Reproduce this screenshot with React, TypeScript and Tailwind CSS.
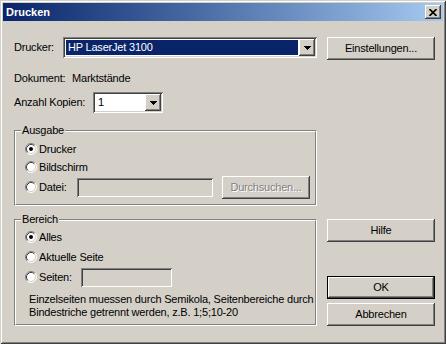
import type { ReactNode } from 'react';

const raised = 'shadow-[inset_-1px_-1px_#404040,inset_1px_1px_#ffffff,inset_-2px_-2px_#808080,inset_2px_2px_#d4d0c8]';
const sunken = 'shadow-[inset_1px_1px_#808080,inset_-1px_-1px_#ffffff,inset_2px_2px_#404040,inset_-2px_-2px_#d4d0c8]';

function Arrow() {
  return (
    <svg width="7" height="4" viewBox="0 0 7 4" shapeRendering="crispEdges">
      <rect x="0" y="0" width="7" height="1" />
      <rect x="1" y="1" width="5" height="1" />
      <rect x="2" y="2" width="3" height="1" />
      <rect x="3" y="3" width="1" height="1" />
    </svg>
  );
}

function Combo({ width, value, selected }: { width: string; value: string; selected?: boolean }) {
  return (
    <div className={`${width} h-[21px] bg-white ${sunken} flex p-[2px]`}>
      <div className="flex-1 flex p-[1px]">
        <span
          className={
            selected
              ? 'flex-1 bg-[#0a246a] text-white pl-[2px] flex items-center'
              : 'flex-1 pl-[2px] flex items-center'
          }
        >
          {value}
        </span>
      </div>
      <div className={`w-[16px] h-[17px] bg-[#d4d0c8] ${raised} flex items-center justify-center`}>
        <Arrow />
      </div>
    </div>
  );
}

function Radio({ checked }: { checked?: boolean }) {
  return (
    <svg width="12" height="12" viewBox="0 0 12 12" className="shrink-0">
      <circle cx="6" cy="6" r="5" fill="#fff" />
      <path d="M2.11 9.89 A5.5 5.5 0 0 1 9.89 2.11" stroke="#808080" fill="none" />
      <path d="M9.89 2.11 A5.5 5.5 0 0 1 2.11 9.89" stroke="#ffffff" fill="none" />
      <path d="M2.82 9.18 A4.5 4.5 0 0 1 9.18 2.82" stroke="#404040" fill="none" />
      <path d="M9.18 2.82 A4.5 4.5 0 0 1 2.82 9.18" stroke="#d4d0c8" fill="none" />
      {checked && <circle cx="6" cy="6" r="2" fill="#000" />}
    </svg>
  );
}

function Group({ title, className, children }: { title: string; className: string; children: ReactNode }) {
  return (
    <div className={`relative border border-t-[#808080] border-l-[#808080] border-r-white border-b-white ${className}`}>
      <div className="border border-t-white border-l-white border-r-[#808080] border-b-[#808080]">{children}</div>
      <span className="absolute top-[-7px] left-[6px] px-[1px] bg-[#d4d0c8] leading-[13px]">{title}</span>
    </div>
  );
}

function Btn({
  children,
  className = '',
  isDefault,
  disabled,
}: {
  children: ReactNode;
  className?: string;
  isDefault?: boolean;
  disabled?: boolean;
}) {
  const label = disabled ? 'text-[#808080] [text-shadow:1px_1px_0_#ffffff]' : '';
  if (isDefault) {
    return (
      <div className={`h-[23px] border border-black ${className}`}>
        <div className={`h-full bg-[#d4d0c8] ${raised} flex items-center justify-center`}>{children}</div>
      </div>
    );
  }
  return (
    <div className={`h-[23px] bg-[#d4d0c8] ${raised} flex items-center justify-center ${label} ${className}`}>
      {children}
    </div>
  );
}

export default function App() {
  return (
    <div className="w-[446px] h-[344px] bg-[#d4d0c8] p-[3px] shadow-[inset_1px_1px_#d4d0c8,inset_-1px_-1px_#404040,inset_2px_2px_#ffffff,inset_-2px_-2px_#808080] font-['Liberation_Sans',Arial,sans-serif] text-[11px] tracking-[-0.2px] text-black select-none">
      {/* Title bar */}
      <div className="h-[18px] bg-linear-to-r from-[#0a246a] to-[#a6caf0] flex items-center justify-between pl-[3px] pr-[2px]">
        <span className="text-white font-bold tracking-normal">Drucken</span>
        <div className={`w-[16px] h-[14px] bg-[#d4d0c8] ${raised} flex items-center justify-center`}>
          <svg width="8" height="7" viewBox="0 0 8 7">
            <path d="M0.5 0 L7.5 7 M7.5 0 L0.5 7" stroke="#000" strokeWidth="1.6" />
          </svg>
        </div>
      </div>

      <div className="flex pl-[11px] pt-[16px] gap-[10px]">
        {/* Left column */}
        <div className="w-[303px] flex flex-col">
          <div className="h-[21px] flex items-center">
            <span className="w-[49px]">Drucker:</span>
            <Combo width="w-[254px]" value="HP LaserJet 3100" selected />
          </div>

          <div className="mt-[14px] h-[13px] leading-[13px] flex">
            <span className="w-[58px]">Dokument:</span>
            <span>Marktstände</span>
          </div>

          <div className="mt-[7px] h-[21px] flex items-center">
            <span className="w-[79px]">Anzahl Kopien:</span>
            <Combo width="w-[70px]" value="1" />
          </div>

          <Group title="Ausgabe" className="mt-[17px]">
            <div className="pt-[8px] pb-[6px] pl-[9px] flex flex-col">
              <div className="h-[18px] flex items-center gap-[2px]">
                <Radio checked />
                <span>Drucker</span>
              </div>
              <div className="h-[18px] flex items-center gap-[2px]">
                <Radio />
                <span>Bildschirm</span>
              </div>
              <div className="h-[22px] flex items-center gap-[2px]">
                <Radio />
                <span className="w-[36px]">Datei:</span>
                <div className={`w-[136px] h-[19px] bg-[#d4d0c8] ${sunken}`} />
                <Btn disabled className="ml-[7px] w-[88px] h-[21px]">
                  Durchsuchen...
                </Btn>
              </div>
            </div>
          </Group>

          <Group title="Bereich" className="mt-[13px]">
            <div className="pt-[6px] pb-[5px] pl-[9px] flex flex-col">
              <div className="h-[20px] flex items-center gap-[2px]">
                <Radio checked />
                <span>Alles</span>
              </div>
              <div className="h-[20px] flex items-center gap-[2px]">
                <Radio />
                <span>Aktuelle Seite</span>
              </div>
              <div className="h-[20px] flex items-center gap-[2px]">
                <Radio />
                <span className="w-[40px]">Seiten:</span>
                <div className={`w-[91px] h-[19px] bg-[#d4d0c8] ${sunken}`} />
              </div>
              <div className="mt-[6px] pl-[4px] leading-[13px] whitespace-nowrap">
                <div>Einzelseiten muessen durch Semikola, Seitenbereiche durch</div>
                <div>Bindestriche getrennt werden, z.B. 1;5;10-20</div>
              </div>
            </div>
          </Group>
        </div>

        {/* Right column */}
        <div className="w-[108px] flex flex-col">
          <Btn>Einstellungen...</Btn>
          <Btn className="mt-[159px]">Hilfe</Btn>
          <Btn isDefault className="mt-[34px]">OK</Btn>
          <Btn className="mt-[4px]">Abbrechen</Btn>
        </div>
      </div>
    </div>
  );
}
